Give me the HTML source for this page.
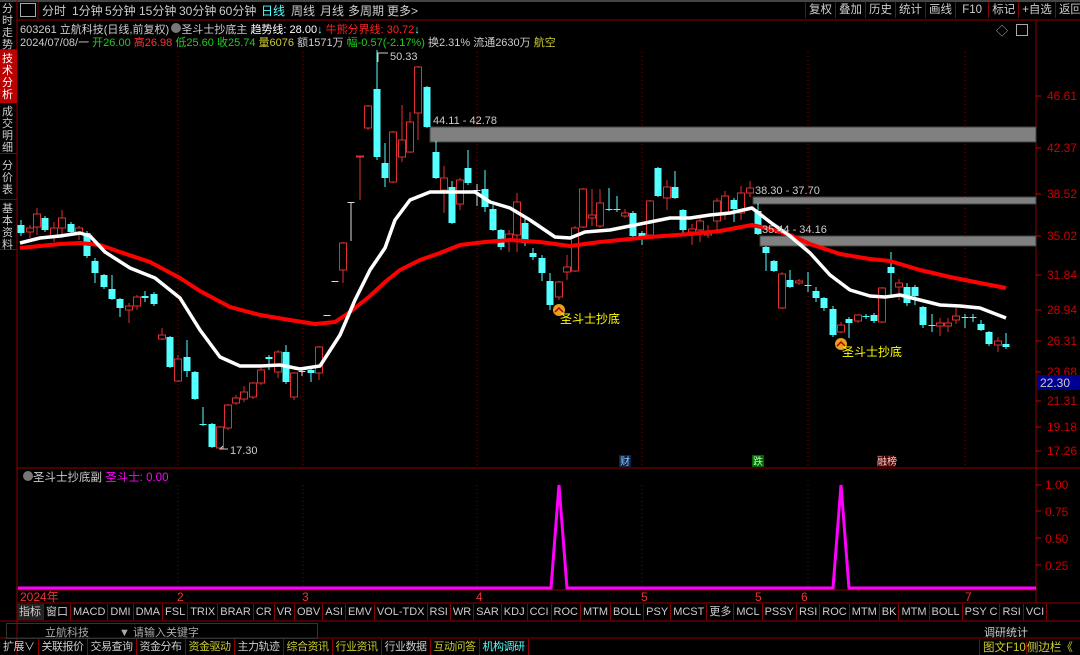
<!DOCTYPE html>
<html><head><meta charset="utf-8"><style>
body{margin:0;width:1080px;height:655px;background:#000;overflow:hidden;font-family:"Liberation Sans","Noto Sans CJK SC",sans-serif;font-size:12px;color:#ccc;position:relative}
.a{position:absolute;white-space:nowrap}
.tabs span{display:inline-block;border-right:1px solid #8b0000;padding:0 3px;height:16px;line-height:16px}
.t2 span{padding:0 2px}
</style></head><body>
<svg width="1080" height="655" style="position:absolute;left:0;top:0" id="s" font-family="Liberation Sans,Noto Sans CJK SC,sans-serif">
<rect x="0" y="0" width="1080" height="655" fill="#000"/>
<line x1="0" y1="1" x2="1080" y2="1" stroke="#888"/>
<line x1="17" y1="20" x2="1080" y2="20" stroke="#8b0000"/>
<line x1="17" y1="0" x2="17" y2="655" stroke="#8b0000"/>
<line x1="1036" y1="20" x2="1036" y2="603" stroke="#8b0000"/>
<line x1="17" y1="468" x2="1080" y2="468" stroke="#8b0000"/>
<line x1="17" y1="590" x2="1036" y2="590" stroke="#8b0000"/>
<line x1="17" y1="603" x2="1080" y2="603" stroke="#8b0000"/>
<line x1="0" y1="621" x2="1080" y2="621" stroke="#8b0000"/>
<line x1="0" y1="638" x2="1080" y2="638" stroke="#8b0000"/>
<g stroke="#8b0000" stroke-dasharray="1,3">
<line x1="178" y1="52" x2="178" y2="465"/><line x1="303" y1="52" x2="303" y2="465"/><line x1="477" y1="52" x2="477" y2="465"/><line x1="642" y1="52" x2="642" y2="465"/><line x1="808" y1="52" x2="808" y2="465"/><line x1="965" y1="52" x2="965" y2="465"/>
<line x1="178" y1="485" x2="178" y2="588"/><line x1="303" y1="485" x2="303" y2="588"/><line x1="477" y1="485" x2="477" y2="588"/><line x1="642" y1="485" x2="642" y2="588"/><line x1="808" y1="485" x2="808" y2="588"/>
</g>
<g fill="#808080" stroke="#444"><rect x="430" y="127" width="606" height="15"/><rect x="753" y="197" width="283" height="7"/><rect x="760" y="236" width="276" height="10"/></g>
<g id="c"></g>
<polyline id="rma" fill="none" stroke="#f00" stroke-width="4" stroke-linejoin="round"/>
<polyline id="wma" fill="none" stroke="#fff" stroke-width="3.5" stroke-linejoin="round"/>
<g font-size="11" fill="#ccc"><text x="390" y="60">50.33</text><text x="433" y="124">44.11 - 42.78</text><text x="755" y="194">38.30 - 37.70</text><text x="762" y="233">35.44 - 34.16</text><text x="230" y="454">17.30</text></g>
<g stroke="#ccc" fill="none"><path d="M378 62V53l10 0"/><path d="M228 449h-8l3-3"/></g>
<circle cx="559" cy="310" r="6" fill="#e8a020"/><path d="M555 312l4-4 4 4" stroke="#a00" stroke-width="1.5" fill="none"/>
<circle cx="841" cy="344" r="6" fill="#e8a020"/><path d="M837 346l4-4 4 4" stroke="#a00" stroke-width="1.5" fill="none"/>
<g font-size="12" fill="#ff0"><text x="560" y="323">圣斗士抄底</text><text x="842" y="356">圣斗士抄底</text></g>
<g fill="#c00" font-size="12">
<text x="1047" y="100">46.61</text><text x="1047" y="152">42.37</text><text x="1047" y="198">38.52</text><text x="1047" y="240">35.02</text><text x="1047" y="279">31.84</text><text x="1047" y="314">28.94</text><text x="1047" y="345">26.31</text><text x="1047" y="376">23.68</text><text x="1047" y="405">21.31</text><text x="1047" y="431">19.18</text><text x="1047" y="455">17.26</text>
<text x="1045" y="489">1.00</text><text x="1045" y="516">0.75</text><text x="1045" y="543">0.50</text><text x="1045" y="570">0.25</text>
</g>
<g stroke="#c00"><path d="M1036 96h5M1036 148h5M1036 194h5M1036 236h5M1036 275h5M1036 310h5M1036 341h5M1036 372h5M1036 401h5M1036 427h5M1036 451h5M1036 485h5M1036 511h5M1036 538h5M1036 565h5"/></g>
<rect x="1037" y="375" width="43" height="15" fill="#000090"/><text x="1040" y="387" fill="#ccc" font-size="12">22.30</text>
<path d="M18 588H551L559 485L567 588H833L841 485L849 588H1036" fill="none" stroke="#f0f" stroke-width="3"/>
<rect x="619" y="455" width="12" height="12" fill="#124"/><text x="620" y="465" fill="#8cf" font-size="10">财</text>
<rect x="752" y="455" width="12" height="12" fill="#060"/><text x="753" y="465" fill="#afa" font-size="10">跌</text>
<rect x="877" y="455" width="18" height="12" fill="#400"/><text x="877" y="465" fill="#fcc" font-size="10">融榜</text>
<g font-size="12" fill="#e33"><text x="20" y="601">2024年</text><text x="177" y="601">2</text><text x="302" y="601">3</text><text x="476" y="601">4</text><text x="641" y="601">5</text><text x="755" y="601">5</text><text x="801" y="601">6</text><text x="965" y="601">7</text></g>
<circle cx="28" cy="476" r="5" fill="#777"/><circle cx="176" cy="28" r="5" fill="#777"/>
<g font-size="12" fill="#ccc"><text x="42" y="15">分时</text><text x="72" y="15">1分钟</text><text x="105" y="15">5分钟</text><text x="139" y="15">15分钟</text><text x="179" y="15">30分钟</text><text x="219" y="15">60分钟</text><text x="261" y="15" fill="#5ff">日线</text><text x="291" y="15">周线</text><text x="320" y="15">月线</text><text x="348" y="15">多周期</text><text x="387" y="15">更多&gt;</text></g>
<line x1="38" y1="2" x2="38" y2="20" stroke="#8b0000"/>
</svg>
<div class="a" style="left:0;top:0;width:17px;height:250px;font-size:11px;line-height:12px;color:#ccc">
<div style="height:50px;padding:3px 2px 0;border-bottom:1px solid #8b0000;box-sizing:border-box">分<br>时<br>走<br>势</div>
<div style="height:53px;padding:3px 2px 0;background:#b00;color:#fff;box-sizing:border-box">技<br>术<br>分<br>析</div>
<div style="height:51px;padding:3px 2px 0;border-bottom:1px solid #8b0000;box-sizing:border-box">成<br>交<br>明<br>细</div>
<div style="height:46px;padding:6px 2px 0;border-bottom:1px solid #8b0000;box-sizing:border-box">分<br>价<br>表</div>
<div style="height:50px;padding:3px 2px 0;border-bottom:1px solid #8b0000;box-sizing:border-box">基<br>本<br>资<br>料</div>
</div>
<div class="a" style="left:20px;top:3px;width:14px;height:12px;border:1px solid #aaa"></div>
<div class="a tabs" style="left:805px;top:2px;font-size:11.5px;border-left:1px solid #8b0000"><span>复权</span><span>叠加</span><span>历史</span><span>统计</span><span>画线</span><span>&nbsp;F10&nbsp;</span><span>标记</span><span>+自选</span><span style="border:0">返回</span></div>
<div class="a" style="left:20px;top:21px;font-size:11px">603261 立航科技(日线,前复权) &nbsp;&nbsp;&nbsp;圣斗士抄底主 <span style="color:#fff">趋势线: 28.00</span><span style="color:#5ff">↓</span> <span style="color:#f22">牛熊分界线: 30.72</span><span style="color:#5ff">↓</span></div>
<div class="a" style="left:20px;top:34px;font-size:11px">2024/07/08/一 <span style="color:#2c2">开26.00</span> <span style="color:#f33">高26.98</span> <span style="color:#2c2">低25.60</span> <span style="color:#2c2">收25.74</span> <span style="color:#cc3">量6076</span> 额1571万 <span style="color:#2c2">幅-0.57(-2.17%)</span> 换2.31% 流通2630万 <span style="color:#cc3">航空</span></div>
<div class="a" style="left:1016px;top:24px;width:10px;height:10px;border:1px solid #aaa"></div>
<div class="a" style="left:996px;top:22px;color:#aaa">◇</div>
<div class="a" style="left:33px;top:469px;font-size:11.5px">圣斗士抄底副 <span style="color:#f0f">圣斗士: 0.00</span></div>
<div class="a tabs t2" style="left:17px;top:604px;font-size:11px"><span style="background:#222">指标</span><span>窗口</span><span>MACD</span><span>DMI</span><span>DMA</span><span>FSL</span><span>TRIX</span><span>BRAR</span><span>CR</span><span>VR</span><span>OBV</span><span>ASI</span><span>EMV</span><span>VOL-TDX</span><span>RSI</span><span>WR</span><span>SAR</span><span>KDJ</span><span>CCI</span><span>ROC</span><span>MTM</span><span>BOLL</span><span>PSY</span><span>MCST</span><span>更多</span><span>MCL</span><span>PSSY</span><span>RSI</span><span>ROC</span><span>MTM</span><span>BK</span><span>MTM</span><span>BOLL</span><span>PSY C</span><span>RSI</span><span>VCI</span></div>
<div class="a" style="left:6px;top:623px;width:310px;height:14px;border:1px solid #333;font-size:11px;color:#aaa"><span style="margin-left:38px">立航科技</span><span style="margin-left:30px">▼ 请输入关键字</span></div>
<div class="a" style="left:984px;top:624px;font-size:11px">调研统计</div>
<div class="a tabs" style="left:0;top:639px;font-size:11px;letter-spacing:-0.5px"><span>扩展∨</span><span>关联报价</span><span>交易查询</span><span>资金分布</span><span style="color:#cc3">资金驱动</span><span>主力轨迹</span><span style="color:#cc3">综合资讯</span><span style="color:#cc3">行业资讯</span><span>行业数据</span><span style="color:#cc3">互动问答</span><span style="color:#5ff">机构调研</span></div>
<div class="a" style="left:979px;top:639px;font-size:11.5px;color:#cc3;border-left:1px solid #8b0000;padding-left:3px">图文F10<span style="border-left:1px solid #8b0000">侧边栏《</span></div>
<script>
var C=[[21,225,233,220,236,'c'],[30,228,232,225,238,'r'],[37,214,227,208,235,'r'],[45,218,230,216,232,'c'],[54,228,236,222,242,'r'],[62,218,228,210,238,'r'],[71,224,232,222,234,'c'],[79,228,234,226,240,'r'],[87,233,256,231,258,'c'],[95,261,273,258,283,'c'],[104,275,287,274,289,'c'],[112,289,299,275,300,'c'],[120,299,308,298,317,'c'],[129,306,310,303,323,'r'],[137,297,306,295,310,'r'],[145,296,298,291,302,'c'],[154,294,304,292,306,'c'],[162,335,339,328,340,'r'],[170,337,367,336,368,'c'],[178,359,381,355,382,'r'],[187,357,371,340,377,'c'],[195,372,399,371,400,'c'],[203,424,425,407,426,'c'],[212,424,447,423,448,'c'],[220,427,448,426,449,'r'],[228,405,428,404,430,'r'],[236,398,403,395,405,'r'],[244,392,399,386,402,'r'],[253,383,397,382,399,'r'],[261,370,383,368,385,'r'],[269,357,359,355,370,'c'],[278,352,372,350,378,'r'],[286,352,382,345,384,'c'],[294,373,397,372,400,'r'],[302,371,372,368,376,'w'],[311,370,373,368,382,'c'],[319,347,373,346,380,'r'],[327,315,316,315,316,'w'],[335,281,282,281,282,'w'],[343,243,270,242,283,'r'],[351,202,203,202,241,'w'],[360,156,157,156,200,'r'],[368,106,128,105,130,'r'],[377,89,157,50,160,'c'],[385,163,178,143,187,'c'],[393,132,182,131,183,'r'],[402,140,157,105,162,'r'],[410,122,152,112,153,'r'],[418,67,113,66,140,'r'],[427,87,127,86,128,'c'],[436,152,178,141,179,'c'],[444,178,190,166,213,'r'],[452,187,223,181,224,'c'],[460,180,204,178,210,'r'],[468,168,183,150,185,'c'],[477,190,191,184,206,'w'],[485,189,207,170,212,'c'],[493,209,230,205,231,'c'],[501,230,247,229,250,'c'],[509,234,240,230,252,'r'],[517,202,235,193,252,'r'],[525,223,243,216,246,'c'],[533,253,257,248,260,'c'],[542,258,273,255,281,'c'],[550,281,305,273,310,'c'],[559,282,297,281,300,'r'],[567,267,272,255,280,'r'],[575,228,271,226,272,'r'],[583,189,227,188,228,'r'],[592,215,218,189,226,'r'],[600,203,226,189,228,'r'],[609,209,210,188,211,'c'],[617,209,210,196,212,'c'],[625,213,216,209,218,'r'],[633,213,236,211,237,'c'],[642,233,237,231,245,'c'],[650,201,235,200,236,'r'],[658,168,196,167,197,'c'],[667,187,198,180,210,'r'],[675,187,198,171,199,'c'],[683,210,230,209,236,'c'],[692,229,232,224,245,'r'],[700,221,230,215,242,'r'],[708,231,235,225,238,'r'],[717,201,221,198,230,'r'],[725,196,213,191,220,'r'],[734,200,209,198,222,'c'],[741,193,213,186,220,'r'],[750,188,193,181,197,'r'],[758,211,234,203,235,'c'],[766,247,253,246,271,'c'],[774,261,271,260,272,'c'],[782,274,308,272,309,'r'],[790,280,287,270,288,'c'],[799,281,283,279,285,'r'],[808,285,286,272,292,'c'],[816,291,298,287,302,'c'],[824,298,308,297,311,'c'],[833,309,335,306,337,'c'],[841,325,332,322,333,'r'],[849,319,323,317,338,'c'],[858,315,321,314,323,'r'],[866,316,317,314,319,'c'],[874,315,321,313,323,'c'],[882,288,322,287,323,'r'],[891,267,273,252,296,'c'],[899,283,287,279,300,'r'],[907,287,303,283,306,'c'],[915,287,296,285,305,'c'],[923,307,325,306,328,'c'],[932,325,326,314,332,'c'],[940,323,326,318,336,'r'],[948,323,326,318,332,'r'],[956,316,320,308,324,'r'],[965,317,318,314,328,'c'],[973,317,318,314,322,'c'],[981,324,330,320,331,'c'],[989,332,344,331,346,'c'],[998,341,345,337,352,'r'],[1006,344,347,333,349,'c']];
var h='';C.forEach(function(k){var x=k[0],col=k[5]=='r'?'#e03030':k[5]=='c'?'#54ffff':'#ddd';h+='<line x1="'+x+'" y1="'+k[3]+'" x2="'+x+'" y2="'+k[4]+'" stroke="'+col+'"/>';var hh=Math.max(1,k[2]-k[1]);if(k[5]=='r')h+='<rect x="'+(x-3.5)+'" y="'+k[1]+'" width="7" height="'+hh+'" fill="#000" stroke="'+col+'"/>';else h+='<rect x="'+(x-3.5)+'" y="'+k[1]+'" width="7" height="'+hh+'" fill="'+col+'"/>';});
document.getElementById('c').innerHTML=h;
document.getElementById('wma').setAttribute('points','20,243 40,238 60,236 80,233 90,236 105,252 130,268 155,278 180,298 200,330 220,357 240,366 260,366 280,365 300,369 320,366 340,335 355,300 370,270 385,248 395,220 410,200 430,192 450,192 475,192 490,202 510,208 530,220 555,237 570,238 585,232 610,230 630,226 650,222 670,218 690,218 710,215 730,213 752,208 770,222 790,236 810,253 830,275 850,290 870,296 885,297 900,295 920,300 940,305 960,306 980,308 1006,318');
document.getElementById('rma').setAttribute('points','20,248 60,244 80,243 100,245 120,252 150,262 180,278 200,291 230,307 260,315 290,320 315,324 335,322 350,312 370,296 385,282 400,270 420,260 440,253 460,245 485,242 510,240 540,242 570,246 600,242 630,239 650,237 690,234 720,231 752,225 770,229 790,235 810,244 840,254 870,259 890,261 920,270 950,277 980,283 1006,288');
</script>
</body></html>
